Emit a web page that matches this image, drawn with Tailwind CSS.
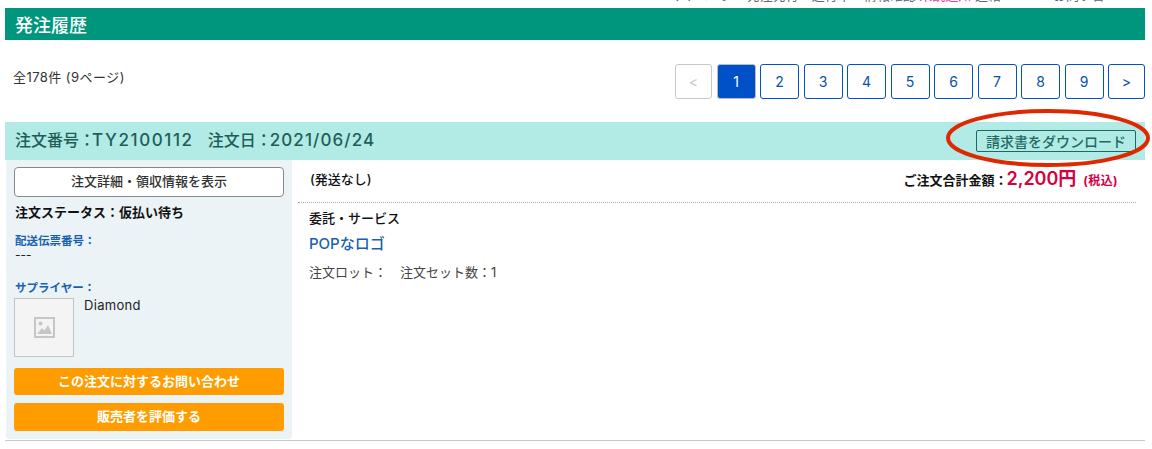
<!DOCTYPE html>
<html lang="ja">
<head>
<meta charset="utf-8">
<script src="https://cdn.jsdelivr.net/npm/@tailwindcss/browser@4"></script>
</head>
<body class="bg-white font-['Inter','Noto_Sans_CJK_JP',sans-serif] text-[#222]">
<div class="relative w-[1150px] h-[449px] overflow-hidden px-[5px]">
  <div class="h-[8px] overflow-hidden flex justify-end pr-[40px]">
    <div class="text-[13px] leading-[13px] -mt-[11px] text-[#666] whitespace-pre">マイページ　発注発行　進行中・情報確認 <span class="text-[#e0409a]">未読通知</span> 連絡・・・　お問い合</div>
  </div>
  <h1 class="h-[32px] bg-[#00967d] text-white text-[18px] font-medium leading-[36px] pl-[10px]">発注履歴</h1>

  <div class="h-[82px] flex justify-between items-start">
    <p class="text-[13px] leading-[18px] mt-[28px] ml-[8px] text-[#333] tracking-[0.45px]">全178件 (9ページ)</p>
    <nav class="flex gap-[4.5px] mt-[24px] text-[14px]">
      <span class="w-[37px] h-[35px] flex items-center justify-center rounded-[3px] border border-[#c8c8c8] text-[#c8c8c8]">&lt;</span>
      <span class="w-[39px] h-[35px] flex items-center justify-center rounded-[3px] border border-[#b8bcc4] bg-[#0050c8] text-white">1</span>
      <a class="w-[39px] h-[35px] flex items-center justify-center rounded-[3px] border border-[#0050c8] text-[#0a50b0]">2</a>
      <a class="w-[39px] h-[35px] flex items-center justify-center rounded-[3px] border border-[#0050c8] text-[#0a50b0]">3</a>
      <a class="w-[39px] h-[35px] flex items-center justify-center rounded-[3px] border border-[#0050c8] text-[#0a50b0]">4</a>
      <a class="w-[39px] h-[35px] flex items-center justify-center rounded-[3px] border border-[#0050c8] text-[#0a50b0]">5</a>
      <a class="w-[39px] h-[35px] flex items-center justify-center rounded-[3px] border border-[#0050c8] text-[#0a50b0]">6</a>
      <a class="w-[39px] h-[35px] flex items-center justify-center rounded-[3px] border border-[#0050c8] text-[#0a50b0]">7</a>
      <a class="w-[39px] h-[35px] flex items-center justify-center rounded-[3px] border border-[#0050c8] text-[#0a50b0]">8</a>
      <a class="w-[39px] h-[35px] flex items-center justify-center rounded-[3px] border border-[#0050c8] text-[#0a50b0]">9</a>
      <a class="w-[37px] h-[35px] flex items-center justify-center rounded-[3px] border border-[#0050c8] text-[#0a50b0]">&gt;</a>
    </nav>
  </div>

  <div class="h-[38px] bg-[#b2eae6] flex items-center justify-between pl-[10px] pr-[9px]">
    <div class="flex items-baseline text-[16px] font-medium text-[#1d5f58] whitespace-pre">
      <span>注文番号：</span><span class="-ml-[3px] text-[17px] tracking-[1.6px]">TY2100112</span><span class="ml-[14px]">注文日：</span><span class="-ml-[2px] text-[17px] tracking-[1.1px]">2021/06/24</span>
    </div>
    <a class="w-[160px] h-[22px] flex items-center justify-center rounded-[2px] border border-[#1d6a62] text-[14px] font-medium text-[#1d6a62]">請求書をダウンロード</a>
  </div>

  <div class="flex h-[281px] border-b border-[#c8c8c8]">
    <aside class="w-[286px] h-[279px] ml-px bg-[#ebf3f6] rounded-b-[3px] px-[8px] pt-[7px] shrink-0">
      <a class="h-[30px] flex items-center justify-center bg-white rounded-[4px] border border-[#888] text-[13px] font-medium text-[#333]">注文詳細・領収情報を表示</a>
      <p class="text-[13px] font-bold leading-[18px] text-[#111] mt-[6px] ml-px">注文ステータス：仮払い待ち</p>
      <p class="text-[11.500px] font-bold leading-[14px] text-[#1a5fb0] mt-[13px] ml-px">配送伝票番号：</p>
      <p class="text-[12px] leading-[14px] ml-px">---</p>
      <p class="text-[11.500px] font-bold leading-[14px] text-[#1a5fb0] mt-[19px] ml-px">サプライヤー：</p>
      <div class="flex gap-[10px] mt-[3px]">
        <div class="w-[60px] h-[59px] bg-[#f4f4f4] border border-[#c4c4c4] flex items-center justify-center">
          <svg width="21" height="21" viewBox="0 0 21 21" aria-hidden="true">
            <rect x="1" y="1" width="19" height="19" fill="none" stroke="#c6c6c6" stroke-width="2"/>
            <circle cx="6.500" cy="6.500" r="2" fill="#c6c6c6"/>
            <path d="M3 17l5-6 2.500 2.500L14 8l4 9z" fill="#c6c6c6"/>
          </svg>
        </div>
        <span class="text-[13px] leading-[15px] text-[#222] tracking-[0.3px]">Diamond</span>
      </div>
      <a class="mt-[11px] h-[27px] flex items-center justify-center rounded-[3px] bg-[#ff9d00] text-white text-[13px] font-bold">この注文に対するお問い合わせ</a>
      <a class="mt-[8px] h-[28px] flex items-center justify-center rounded-[3px] bg-[#ff9d00] text-white text-[13px] font-bold">販売者を評価する</a>
    </aside>

    <section class="flex-1 pl-[6px] pr-[9px]">
      <div class="h-[43px] flex justify-between border-b border-dotted border-[#aaa]">
        <span class="text-[13px] font-medium leading-[18px] mt-[10px] ml-[12px] text-[#111]">(発送なし)</span>
        <div class="flex items-baseline mr-[18px] mt-[5px] h-[26px] text-[#111]">
          <span class="text-[13px] font-bold">ご注文合計金額：</span>
          <span class="text-[18px] font-semibold text-[#d6003f] -ml-[1px]">2,200円</span>
          <span class="text-[12px] font-bold text-[#d6003f] ml-[7px] tracking-[0.4px]">(税込)</span>
        </div>
      </div>
      <div class="pl-[11px]">
        <p class="text-[13px] font-medium leading-[18px] text-[#111] mt-[6px]">委託・サービス</p>
        <p class="text-[15px] font-medium leading-[20px] text-[#1a5fb0] mt-[7px]">POPなロゴ</p>
        <p class="text-[13px] leading-[18px] text-[#444] mt-[9px] whitespace-pre">注文ロット：　注文セット数：1</p>
      </div>
    </section>
  </div>

  <svg class="absolute left-[940px] top-[105px] pointer-events-none" width="210" height="65" viewBox="0 0 210 65" aria-hidden="true">
    <ellipse cx="108" cy="33" rx="100" ry="27" fill="none" stroke="#e02800" stroke-width="4"/>
  </svg>
</div>
</body>
</html>
